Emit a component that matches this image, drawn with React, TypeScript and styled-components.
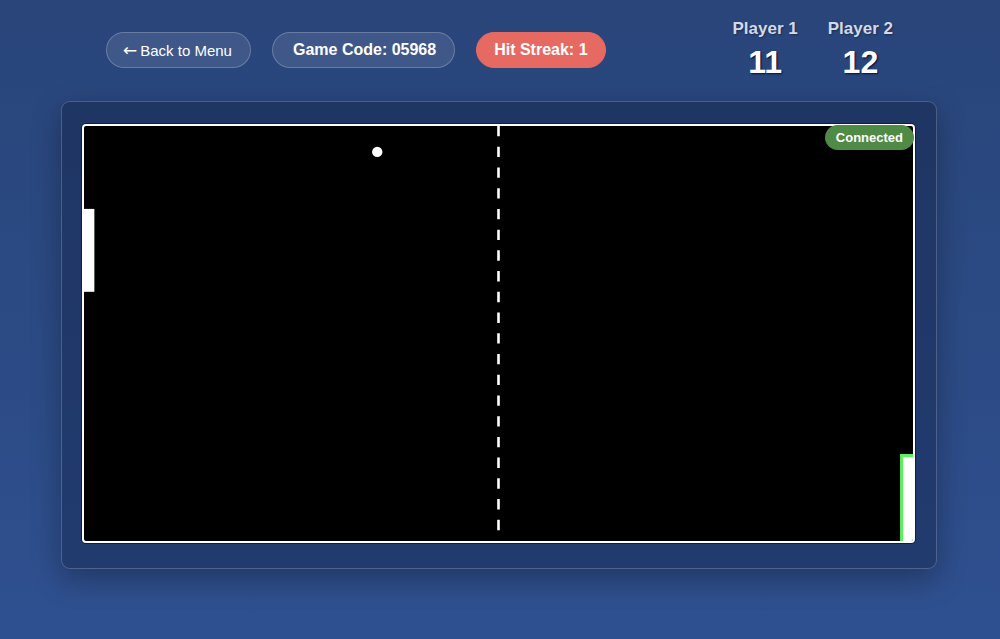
import React from "react";
import styled, { createGlobalStyle } from "styled-components";

const GlobalStyle = createGlobalStyle`
  html, body { margin: 0; padding: 0; height: 100%; }
  body {
    font-family: "Liberation Sans", Arial, sans-serif;
    background: linear-gradient(180deg, #29457a 0%, #2c4b86 60%, #2f5090 100%);
    min-height: 639px;
    color: #fff;
    overflow: hidden;
  }
  #root { min-height: 639px; }
`;

const Page = styled.div`
  display: flex;
  flex-direction: column;
  align-items: center;
  padding-top: 17px;
`;

const Header = styled.header`
  width: 788px;
  display: flex;
  justify-content: space-between;
  align-items: flex-start;
  margin-bottom: 20px;
`;

const Controls = styled.div`
  display: flex;
  align-items: center;
  gap: 21px;
  margin-top: 15px;
`;

const Pill = styled.button<{ $variant?: "ghost" | "info" | "alert" }>`
  font-family: "Liberation Sans", Arial, sans-serif;
  height: 36px;
  box-sizing: border-box;
  border-radius: 18px;
  color: #fff;
  cursor: pointer;
  display: inline-flex;
  align-items: center;
  padding: ${(p) =>
    p.$variant === "ghost"
      ? "0 18px 0 16px"
      : p.$variant === "info"
      ? "0 18px 0 20px"
      : "0 17px"};
  font-size: ${(p) => (p.$variant === "ghost" ? "15px" : "16px")};
  font-weight: ${(p) => (p.$variant === "ghost" ? 400 : 700)};
  background: ${(p) =>
    p.$variant === "alert" ? "#e66a62" : "rgba(255, 255, 255, 0.1)"};
  border: 1px solid
    ${(p) =>
      p.$variant === "alert" ? "#e66a62" : "rgba(255, 255, 255, 0.22)"};
`;

const Arrow = styled.span`
  font-family: "DejaVu Sans", sans-serif;
  font-size: 17px;
  margin-right: 3px;
`;

const Scores = styled.div`
  display: flex;
  gap: 30px;
  margin-top: 2px;
  margin-right: 1px;
`;

const ScoreBlock = styled.div`
  display: flex;
  flex-direction: column;
  align-items: center;
`;

const ScoreLabel = styled.div`
  font-size: 17px;
  font-weight: 700;
  color: #d3d9e8;
  text-shadow: 1px 1px 2px rgba(0, 0, 0, 0.35);
`;

const ScoreValue = styled.div`
  font-size: 32px;
  font-weight: 700;
  margin-top: 5px;
  color: #fff;
  text-shadow: 1px 1px 2px rgba(0, 10, 60, 0.9);
`;

const Board = styled.section`
  width: 876px;
  margin-right: 2px;
  box-sizing: border-box;
  padding: 22px 21px 25px 20px;
  background: rgba(5, 12, 35, 0.28);
  border: 1px solid rgba(255, 255, 255, 0.2);
  border-radius: 9px;
  box-shadow: 0 10px 30px rgba(0, 0, 0, 0.3);
`;

const FieldWrap = styled.div`
  position: relative;
`;

const Field = styled.div`
  background: #000;
  border: 2px solid #fff;
  border-radius: 4px;
  box-shadow: 0 0 0 1px #0f1c4a;
  line-height: 0;
  overflow: hidden;
`;

const FieldSvg = styled.svg`
  display: block;
  width: 100%;
  height: auto;
`;

const Status = styled.div`
  position: absolute;
  top: 1px;
  right: 1px;
  height: 25px;
  padding: 0 11px;
  border-radius: 13px;
  background: #4f8a47;
  color: #fff;
  font-size: 13px;
  font-weight: 700;
  display: flex;
  align-items: center;
`;

export default function App() {
  return (
    <>
      <GlobalStyle />
      <Page>
        <Header>
          <Controls>
            <Pill $variant="ghost">
              <Arrow>←</Arrow>Back to Menu
            </Pill>
            <Pill $variant="info">Game Code: 05968</Pill>
            <Pill $variant="alert">Hit Streak: 1</Pill>
          </Controls>
          <Scores>
            <ScoreBlock>
              <ScoreLabel>Player 1</ScoreLabel>
              <ScoreValue>11</ScoreValue>
            </ScoreBlock>
            <ScoreBlock>
              <ScoreLabel>Player 2</ScoreLabel>
              <ScoreValue>12</ScoreValue>
            </ScoreBlock>
          </Scores>
        </Header>
        <Board>
          <FieldWrap>
            <Field>
              <FieldSvg viewBox="0 0 800 400">
                <line
                  x1="400"
                  y1="0"
                  x2="400"
                  y2="400"
                  stroke="#fff"
                  strokeWidth="2.5"
                  strokeDasharray="10 10"
                />
                <rect x="0" y="80" width="10" height="80" fill="#fff" />
                <rect
                  x="789"
                  y="318"
                  width="13"
                  height="86"
                  fill="#fff"
                  stroke="#5ef05e"
                  strokeWidth="3"
                />
                <circle cx="283" cy="25" r="5" fill="#fff" />
              </FieldSvg>
            </Field>
            <Status>Connected</Status>
          </FieldWrap>
        </Board>
      </Page>
    </>
  );
}
